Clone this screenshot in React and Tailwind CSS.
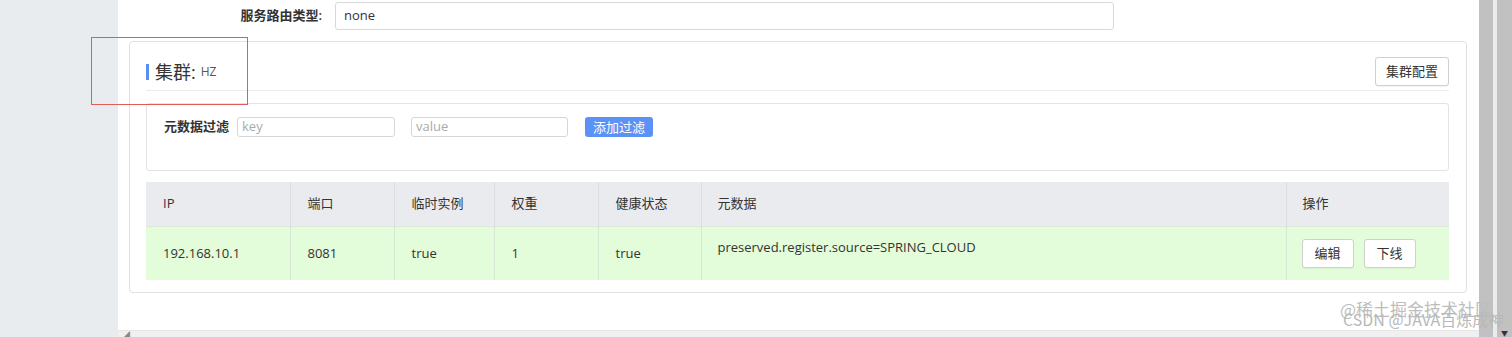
const cols = [
  { label: 'IP', w: 'w-[144px]', value: '192.168.10.1' },
  { label: '端口', w: 'w-[104px]', value: '8081' },
  { label: '临时实例', w: 'w-[100px]', value: 'true' },
  { label: '权重', w: 'w-[104px]', value: '1' },
  { label: '健康状态', w: 'w-[103px]', value: 'true' },
];

function SmallButton({ children, className = '' }) {
  return (
    <button className={`h-[29px] bg-white border border-[#d0d0d0] rounded-[3px] text-[13px] text-[#333] shadow-[0_1px_1px_rgba(0,0,0,0.05)] ${className}`}>
      {children}
    </button>
  );
}

export default function App() {
  return (
    <div
      className="relative w-[1512px] h-[337px] overflow-hidden flex bg-[#e9ecef] text-[13px] text-[#333]"
      style={{ fontFamily: '"Open Sans", "Noto Sans CJK SC", sans-serif' }}
    >
      <div className="w-[118px] shrink-0" />

      <div className="flex-1 flex flex-col bg-white">
        <div className="flex-1 pl-[11px] pr-[12px]">
          {/* route type row */}
          <div className="flex items-center mt-[2px] -ml-[11px]">
            <div className="w-[204px] text-right font-semibold text-[#333]">服务路由类型:</div>
            <div className="ml-[13px] w-[779px] h-[28px] border border-[#d9d9d9] rounded-[3px] flex items-center px-[8px] text-[#333]">
              none
            </div>
          </div>

          {/* cluster card */}
          <div className="mt-[11px] border border-[#e1e1e1] rounded-[4px] pt-[15px] pl-[16px] pr-[17px] pb-[12px]">
            <div className="flex items-center justify-between pb-[4px] border-b border-[#ececec]">
              <div className="flex items-center">
                <span className="w-[3px] h-[16px] bg-[#5b8def] mr-[6px]" />
                <span className="text-[18px] text-[#333] leading-none">集群:</span>
                <span className="text-[12px] text-[#555] ml-[5px]">HZ</span>
              </div>
              <SmallButton className="w-[74px]">集群配置</SmallButton>
            </div>

            <div className="mt-[12px] h-[68px] border border-[#e3e3e3] rounded-[3px] pt-[13px] pl-[17px]">
              <div className="flex items-center">
                <span className="font-semibold text-[#333] w-[73px]">元数据过滤</span>
                <div className="w-[158px] h-[20px] border border-[#d6d6d6] rounded-[3px] flex items-center px-[4px] text-[#aaa]">key</div>
                <div className="ml-[16px] w-[157px] h-[20px] border border-[#d6d6d6] rounded-[3px] flex items-center px-[4px] text-[#aaa]">value</div>
                <button className="ml-[17px] w-[68px] h-[20px] bg-[#5c92f6] rounded-[3px] text-white text-[13px] leading-none">添加过滤</button>
              </div>
            </div>

            <table className="mt-[11px] w-full border-collapse table-fixed">
              <thead>
                <tr className="h-[44px] bg-[#eaebee]">
                  {cols.map((c) => (
                    <th key={c.label} className={`${c.w} text-left font-normal pl-[17px] border-r border-[#dcdde1]`}>{c.label}</th>
                  ))}
                  <th className="text-left font-normal pl-[16px] border-r border-[#dcdde1]">元数据</th>
                  <th className="w-[163px] text-left font-normal pl-[16px]">操作</th>
                </tr>
              </thead>
              <tbody>
                <tr className="h-[54px] bg-[#e3fcd9] border-t border-[#dfe7dc]">
                  {cols.map((c) => (
                    <td key={c.label} className="pl-[17px] border-r border-[#d7e6d0]">{c.value}</td>
                  ))}
                  <td className="pl-[16px] align-top pt-[11px] border-r border-[#d7e6d0]">preserved.register.source=SPRING_CLOUD</td>
                  <td className="pl-[15px]">
                    <div className="flex gap-[10px]">
                      <SmallButton className="w-[52px]">编辑</SmallButton>
                      <SmallButton className="w-[52px]">下线</SmallButton>
                    </div>
                  </td>
                </tr>
              </tbody>
            </table>
          </div>
        </div>

        {/* horizontal scrollbar */}
        <div className="h-[7px] bg-[#f0f0f0] border-t border-[#e6e6e6] flex items-end pl-[6px]">
          <span className="text-[6px] leading-none text-[#888]">◢</span>
        </div>
      </div>

      {/* right scrollbars */}
      <div className="w-[33px] shrink-0 flex bg-[#f0f0f0]">
        <div className="w-[14px] bg-[#c1c1c1]" />
        <div className="w-[4px] bg-[#ececec]" />
        <div className="flex-1 bg-[#c1c1c1] flex items-end justify-center">
          <span className="text-[7px] leading-none text-[#333]">▼</span>
        </div>
      </div>

      {/* annotation box */}
      <div className="absolute left-[91px] top-[37px] w-[157px] h-[68px] border border-[#e25a5a]" />

      {/* watermarks */}
      <div className="absolute left-[1340px] top-[300px] text-[17px] leading-none text-[#bdbdbd] whitespace-nowrap" style={{ fontFamily: '"Noto Sans CJK SC", sans-serif' }}>@稀土掘金技术社区</div>
      <div className="absolute left-[1343px] top-[311px] text-[16px] leading-none text-[#b8b8b8] whitespace-nowrap" style={{ fontFamily: '"Noto Sans CJK SC", sans-serif' }}>CSDN @JAVA百炼成神</div>
    </div>
  );
}
